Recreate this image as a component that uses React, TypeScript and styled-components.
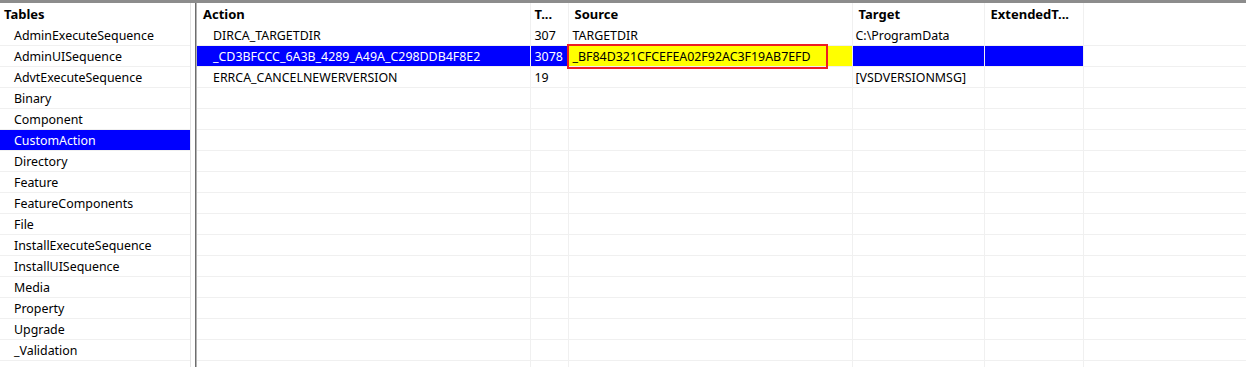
import { FC } from 'react';
import styled, { createGlobalStyle } from 'styled-components';

const tables = [
  'AdminExecuteSequence',
  'AdminUISequence',
  'AdvtExecuteSequence',
  'Binary',
  'Component',
  'CustomAction',
  'Directory',
  'Feature',
  'FeatureComponents',
  'File',
  'InstallExecuteSequence',
  'InstallUISequence',
  'Media',
  'Property',
  'Upgrade',
  '_Validation',
];

const columns = [
  { title: 'Action', width: 333, pad: 6 },
  { title: 'T...', width: 38, pad: 4 },
  { title: 'Source', width: 284, pad: 6 },
  { title: 'Target', width: 132, pad: 6 },
  { title: 'ExtendedT...', width: 99, pad: 6 },
];

interface ActionRow {
  action: string;
  type: string;
  source: string;
  target: string;
  extended: string;
  selected?: boolean;
}

const rows: ActionRow[] = [
  { action: 'DIRCA_TARGETDIR', type: '307', source: 'TARGETDIR', target: 'C:\\ProgramData', extended: '' },
  {
    action: '_CD3BFCCC_6A3B_4289_A49A_C298DDB4F8E2',
    type: '3078',
    source: '_BF84D321CFCEFEA02F92AC3F19AB7EFD',
    target: '',
    extended: '',
    selected: true,
  },
  { action: 'ERRCA_CANCELNEWERVERSION', type: '19', source: '', target: '[VSDVERSIONMSG]', extended: '' },
];

const EMPTY_ROWS = 14;

const GlobalStyle = createGlobalStyle`
  html, body {
    margin: 0;
    padding: 0;
    background: #ffffff;
    overflow: hidden;
  }
  body {
    font-family: "Noto Sans", "Liberation Sans", sans-serif;
    font-size: 12.4px;
    color: #000000;
  }
`;

const App: FC = () => {
  return (
    <>
      <GlobalStyle />
      <Window>
        <TablesPane>
          <PaneHeader>Tables</PaneHeader>
          {tables.map((name) => (
            <TableItem key={name} $selected={name === 'CustomAction'}>
              {name}
            </TableItem>
          ))}
          <TableItem $selected={false} />
        </TablesPane>
        <Splitter />
        <GridPane>
          <Grid>
            <colgroup>
              {columns.map((c) => (
                <col key={c.title} style={{ width: c.width }} />
              ))}
              <col />
            </colgroup>
            <thead>
              <tr>
                {columns.map((c) => (
                  <HeadCell key={c.title} $pad={c.pad}>
                    {c.title}
                  </HeadCell>
                ))}
                <FillHead />
              </tr>
            </thead>
            <tbody>
              {rows.map((r) => (
                <tr key={r.action}>
                  <Cell $pad={16} $selected={!!r.selected}>{r.action}</Cell>
                  <Cell $pad={4} $selected={!!r.selected}>{r.type}</Cell>
                  {r.selected ? (
                    <SourceCell>
                      <Marked>{r.source}</Marked>
                    </SourceCell>
                  ) : (
                    <Cell $pad={4} $selected={false}>{r.source}</Cell>
                  )}
                  <Cell $pad={3} $selected={!!r.selected}>{r.target}</Cell>
                  <Cell $pad={4} $selected={!!r.selected}>{r.extended}</Cell>
                  <FillCell />
                </tr>
              ))}
              {Array.from({ length: EMPTY_ROWS }).map((_, i) => (
                <tr key={i}>
                  {columns.map((c) => (
                    <Cell key={c.title} $pad={4} $selected={false} />
                  ))}
                  <FillCell />
                </tr>
              ))}
            </tbody>
          </Grid>
        </GridPane>
      </Window>
    </>
  );
};

const Window = styled.div`
  display: flex;
  width: 1246px;
  height: 367px;
  border-top: 3px solid #8c8c8c;
  box-sizing: border-box;
  overflow: hidden;
  background: #ffffff;
`;

const TablesPane = styled.div`
  width: 190px;
  flex-shrink: 0;
  border-right: 1px solid #e3e3e3;
  display: flex;
  flex-direction: column;
`;

const PaneHeader = styled.div`
  height: 22px;
  line-height: 22px;
  flex-shrink: 0;
  padding-left: 4px;
  font-weight: 700;
  font-size: 13px;
  white-space: nowrap;
`;

const TableItem = styled.div<{ $selected: boolean }>`
  height: 20px;
  line-height: 22px;
  flex-shrink: 0;
  padding-left: 14px;
  border-bottom: 1px solid #f0f0f0;
  white-space: nowrap;
  overflow: hidden;
  background: ${(p) => (p.$selected ? '#0000ff' : 'transparent')};
  color: ${(p) => (p.$selected ? '#ffffff' : '#000000')};
`;

const Splitter = styled.div`
  width: 1px;
  margin-left: 4px;
  flex-shrink: 0;
  background: #6e6e6e;
  border-right: 1px solid #b4b4b4;
`;

const GridPane = styled.div`
  flex: 1;
  overflow: hidden;
`;

const Grid = styled.table`
  border-collapse: collapse;
  table-layout: fixed;
  width: 100%;
`;

const HeadCell = styled.th<{ $pad: number }>`
  height: 22px;
  padding: 0 0 0 ${(p) => p.$pad}px;
  text-align: left;
  font-weight: 700;
  font-size: 13px;
  border-right: 1px solid #f0f0f0;
  white-space: nowrap;
  overflow: hidden;
`;

const FillHead = styled.th`
  padding: 0;
`;

const Cell = styled.td<{ $pad: number; $selected: boolean }>`
  height: 20px;
  padding: 0 0 0 ${(p) => p.$pad}px;
  border-bottom: 1px solid #f0f0f0;
  border-right: 1px solid #f0f0f0;
  white-space: nowrap;
  overflow: hidden;
  background: ${(p) => (p.$selected ? '#0000ff' : 'transparent')};
  color: ${(p) => (p.$selected ? '#ffffff' : '#000000')};
`;

const SourceCell = styled.td`
  position: relative;
  height: 20px;
  padding: 0 0 0 4px;
  border-bottom: 1px solid #f0f0f0;
  border-right: 1px solid #f0f0f0;
  white-space: nowrap;
  background: #ffff00;
  color: #000000;
`;

const Marked = styled.span`
  &::after {
    content: '';
    position: absolute;
    left: -2px;
    top: -2px;
    width: 257px;
    height: 21px;
    border: 2px solid #ee1c24;
    pointer-events: none;
  }
`;

const FillCell = styled.td`
  padding: 0;
  border-bottom: 1px solid #f0f0f0;
`;

export default App;
